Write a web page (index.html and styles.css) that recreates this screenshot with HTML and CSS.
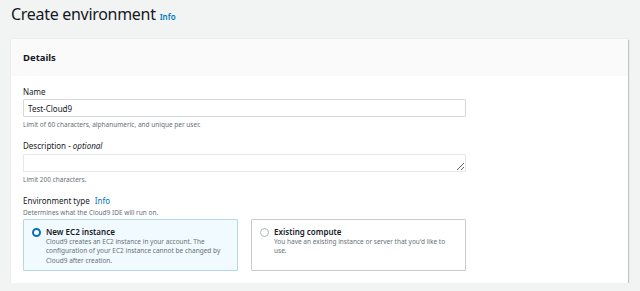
FILE: index.html
```html
<!DOCTYPE html>
<html lang="en">
<head>
    <meta charset="UTF-8">
    <meta name="viewport" content="width=device-width, initial-scale=1.0">
    <title>Create environment</title>
    <link rel="stylesheet" href="styles.css">
</head>
<body>
    <header class="page-header">
        <h1>Create environment</h1>
        <a href="#" class="info-link info-small">Info</a>
    </header>

    <section class="panel">
        <div class="panel-header">
            <h2>Details</h2>
        </div>
        <div class="panel-body">
            <div class="field">
                <label for="envName">Name</label>
                <input type="text" id="envName" value="Test-Cloud9">
                <p class="hint">Limit of 60 characters, alphanumeric, and unique per user.</p>
            </div>

            <div class="field">
                <label for="envDesc">Description - <em>optional</em></label>
                <textarea id="envDesc" rows="1"></textarea>
                <p class="hint">Limit 200 characters.</p>
            </div>

            <div class="field">
                <label>Environment type <a href="#" class="info-link">Info</a></label>
                <p class="hint hint-top">Determines what the Cloud9 IDE will run on.</p>
                <div class="tiles">
                    <label class="tile selected">
                        <span class="radio"></span>
                        <span class="tile-text">
                            <strong>New EC2 instance</strong>
                            <span>Cloud9 creates an EC2 instance in your account. The configuration of your EC2 instance cannot be changed by Cloud9 after creation.</span>
                        </span>
                    </label>
                    <label class="tile">
                        <span class="radio"></span>
                        <span class="tile-text">
                            <strong>Existing compute</strong>
                            <span>You have an existing instance or server that you'd like to use.</span>
                        </span>
                    </label>
                </div>
            </div>
        </div>
    </section>
</body>
</html>
```

FILE: styles.css
```css
/* Base */
* {
    margin: 0;
    padding: 0;
    box-sizing: border-box;
}

body {
    background-color: #f2f3f3;
    font-family: "Noto Sans", "Open Sans", sans-serif;
    color: #16191f;
    padding: 0 12px 0 11px;
}

a {
    text-decoration: none;
}

/* Page title */
.page-header {
    display: flex;
    align-items: baseline;
    gap: 4px;
    padding: 3px 0 0 0;
    height: 39px;
}

.page-header h1 {
    font-size: 16px;
    font-weight: 400;
    line-height: 22px;
    letter-spacing: -0.3px;
}

.info-link {
    color: #0073bb;
}

.info-small {
    font-size: 8px;
    font-weight: 600;
}

/* Panel */
.panel {
    background-color: white;
    box-shadow: 1px 1px 1px rgba(0, 0, 0, 0.18), 0 0 0 0.5px rgba(0, 0, 0, 0.05);
    width: 617px;
}

.panel-header {
    background-color: #fafafa;
    height: 37px;
    padding: 0 12px;
    display: flex;
    align-items: center;
}

.panel-header h2 {
    font-size: 9.5px;
    font-weight: 700;
}

.panel-body {
    padding: 10px 12px 12px 12px;
    display: flex;
    flex-direction: column;
    gap: 10px;
}

/* Fields */
.field {
    width: 443px;
}

.field > label {
    display: block;
    font-size: 8px;
    line-height: 11px;
    margin-bottom: 2px;
}

.field > label .info-link {
    margin-left: 3px;
}

.field input,
.field textarea {
    display: block;
    width: 100%;
    height: 18px;
    border: 1px solid #d5d8d8;
    border-radius: 1px;
    font-family: inherit;
    font-size: 8px;
    color: #16191f;
    padding: 0 4px;
    outline: none;
}

.field textarea {
    border-color: #e6e8e8;
    resize: vertical;
    margin-top: 3px;
}

.hint {
    font-size: 6.5px;
    line-height: 10px;
    color: #687078;
    margin-top: 3px;
}

.hint-top {
    margin-top: 0;
}

/* Tiles */
.tiles {
    display: grid;
    grid-template-columns: 1fr 1fr;
    gap: 13px;
    margin-top: 1px;
}

.tile {
    display: flex;
    gap: 5px;
    padding: 6px 8px 5px 8px;
    border: 1px solid #c6ccce;
    border-radius: 1px;
    min-height: 52px;
}

.tile.selected {
    background-color: #f1faff;
    border-color: #b2d7ee;
}

.radio {
    flex-shrink: 0;
    width: 9px;
    height: 9px;
    border-radius: 50%;
    border: 1px solid #aab7b8;
    background: white;
    margin-top: 1.5px;
}

.tile.selected .radio {
    border: 2.5px solid #0073bb;
}

.tile-text {
    display: flex;
    flex-direction: column;
}

.tile-text strong {
    font-size: 8px;
    font-weight: 600;
    line-height: 11px;
}

.tile-text span {
    font-size: 6.5px;
    line-height: 9.3px;
    color: #687078;
}
```
